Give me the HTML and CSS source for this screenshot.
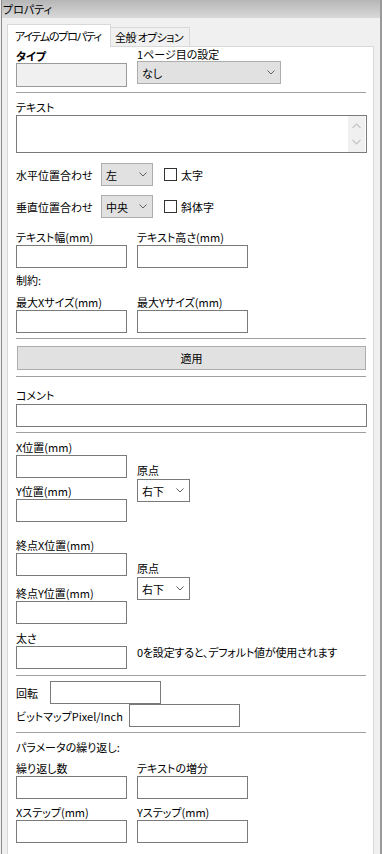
FILE: index.html
```html
<!DOCTYPE html>
<html lang="ja">
<head>
    <meta charset="UTF-8">
    <meta name="viewport" content="width=device-width, initial-scale=1.0">
    <title>プロパティ</title>
    <link rel="stylesheet" href="styles.css">
</head>
<body>
    <div class="window">
        <div class="titlebar">プロパティ</div>

        <div class="tabs">
            <div class="tab active">アイテムのプロパティ</div>
            <div class="tab">全般 オプション</div>
        </div>

        <div class="panel">
            <!-- type / first page -->
            <div class="pair">
                <div>
                    <span class="lbl lbl-bold">タイプ</span>
                    <div class="box box-tall box-disabled"></div>
                </div>
                <div>
                    <span class="lbl lbl-tight">1ページ目の設定</span>
                    <div class="combo combo-gray combo-wide">
                        <span>なし</span>
                        <svg width="8" height="5" viewBox="0 0 8 5"><path d="M0.5 0.5 L4 4 L7.5 0.5" fill="none" stroke="#606060"/></svg>
                    </div>
                </div>
            </div>

            <hr class="sep mt5">

            <!-- text -->
            <span class="lbl mt6">テキスト</span>
            <div class="textarea">
                <div class="scrollbar">
                    <svg width="9" height="6" viewBox="0 0 9 6"><path d="M0.5 5 L4.5 1 L8.5 5" fill="none" stroke="#c4c4c4" stroke-width="1.2"/></svg>
                    <svg width="9" height="6" viewBox="0 0 9 6"><path d="M0.5 1 L4.5 5 L8.5 1" fill="none" stroke="#c4c4c4" stroke-width="1.2"/></svg>
                </div>
            </div>

            <div class="align-row mt10">
                <span class="align-lbl">水平位置合わせ</span>
                <div class="combo combo-gray combo-small">
                    <span>左</span>
                    <svg width="8" height="5" viewBox="0 0 8 5"><path d="M0.5 0.5 L4 4 L7.5 0.5" fill="none" stroke="#606060"/></svg>
                </div>
                <span class="check"></span>
                <span class="check-lbl">太字</span>
            </div>

            <div class="align-row mt9">
                <span class="align-lbl">垂直位置合わせ</span>
                <div class="combo combo-gray combo-small">
                    <span>中央</span>
                    <svg width="8" height="5" viewBox="0 0 8 5"><path d="M0.5 0.5 L4 4 L7.5 0.5" fill="none" stroke="#606060"/></svg>
                </div>
                <span class="check"></span>
                <span class="check-lbl">斜体字</span>
            </div>

            <div class="pair mt11">
                <div>
                    <span class="lbl">テキスト幅(mm)</span>
                    <div class="box"></div>
                </div>
                <div>
                    <span class="lbl">テキスト高さ(mm)</span>
                    <div class="box"></div>
                </div>
            </div>

            <span class="lbl mt4">制約:</span>

            <div class="pair mt6">
                <div>
                    <span class="lbl">最大Xサイズ(mm)</span>
                    <div class="box"></div>
                </div>
                <div>
                    <span class="lbl">最大Yサイズ(mm)</span>
                    <div class="box"></div>
                </div>
            </div>

            <hr class="sep mt5">

            <div class="button mt7">適用</div>

            <hr class="sep mt6">

            <!-- comment -->
            <span class="lbl mt10">コメント</span>
            <div class="box box-full mt1"></div>

            <hr class="sep mt5">

            <!-- position -->
            <div class="pair mt6">
                <div>
                    <span class="lbl">X位置(mm)</span>
                    <div class="box"></div>
                    <span class="lbl mt5">Y位置(mm)</span>
                    <div class="box"></div>
                </div>
                <div>
                    <span class="lbl mt23">原点</span>
                    <div class="combo combo-white mt1">
                        <span>右下</span>
                        <svg width="8" height="5" viewBox="0 0 8 5"><path d="M0.5 0.5 L4 4 L7.5 0.5" fill="none" stroke="#606060"/></svg>
                    </div>
                </div>
            </div>

            <div class="pair mt15">
                <div>
                    <span class="lbl">終点X位置(mm)</span>
                    <div class="box"></div>
                    <span class="lbl mt9">終点Y位置(mm)</span>
                    <div class="box"></div>
                </div>
                <div>
                    <span class="lbl mt23">原点</span>
                    <div class="combo combo-white mt1">
                        <span>右下</span>
                        <svg width="8" height="5" viewBox="0 0 8 5"><path d="M0.5 0.5 L4 4 L7.5 0.5" fill="none" stroke="#606060"/></svg>
                    </div>
                </div>
            </div>

            <div class="pair pair-note mt6">
                <div>
                    <span class="lbl">太さ</span>
                    <div class="box"></div>
                </div>
                <span class="note">0を設定すると、デフォルト値が使用されます</span>
            </div>

            <hr class="sep mt6">

            <div class="inline-row mt5">
                <span class="inline-lbl rot-lbl">回転</span>
                <div class="box"></div>
            </div>
            <div class="inline-row">
                <span class="inline-lbl bmp-lbl">ビットマップPixel/Inch</span>
                <div class="box"></div>
            </div>

            <hr class="sep mt5">

            <!-- repeat -->
            <span class="lbl mt6">パラメータの繰り返し:</span>

            <div class="pair mt5">
                <div>
                    <span class="lbl">繰り返し数</span>
                    <div class="box"></div>
                </div>
                <div>
                    <span class="lbl">テキストの増分</span>
                    <div class="box"></div>
                </div>
            </div>

            <div class="pair mt5">
                <div>
                    <span class="lbl">Xステップ(mm)</span>
                    <div class="box"></div>
                </div>
                <div>
                    <span class="lbl">Yステップ(mm)</span>
                    <div class="box"></div>
                </div>
            </div>
        </div>
    </div>
</body>
</html>
```

FILE: styles.css
```css
* {
    box-sizing: border-box;
}

body {
    margin: 0;
    padding: 0;
    background-color: #f0f0f0;
    font-family: "Noto Sans CJK JP", "Noto Sans", sans-serif;
    font-size: 11px;
    font-feature-settings: "palt";
    color: #000;
    overflow: hidden;
}

.window {
    margin-left: 1px;
    width: 381px;
    border-left: 1px solid #8c8c8c;
    border-right: 2px solid #9a9a9a;
    min-height: 900px;
}

.titlebar {
    height: 18px;
    line-height: 18px;
    padding-left: 1px;
    background: linear-gradient(#b6b6b6, #d9d9d9);
}

/* tabs */
.tabs {
    display: flex;
    align-items: flex-end;
    height: 28px;
    padding-left: 5px;
}

.tab {
    width: 79px;
    height: 19px;
    line-height: 18px;
    padding-left: 4px;
    white-space: nowrap;
    letter-spacing: -0.6px;
    border: 1px solid #d9d9d9;
    border-left: none;
    border-bottom: none;
    background: #f0f0f0;
}

.tab.active {
    position: relative;
    z-index: 1;
    width: 104px;
    height: 23px;
    line-height: 22px;
    margin-bottom: -1px;
    padding-left: 7px;
    letter-spacing: -1.3px;
    border-left: 1px solid #d9d9d9;
    background: #fff;
}

.panel {
    margin-left: 5px;
    width: 367px;
    padding: 0 6px 30px 8px;
    background: #fff;
    border: 1px solid #d9d9d9;
}

/* generic pieces */
.lbl {
    display: block;
    height: 16px;
    line-height: 16px;
    white-space: nowrap;
}

.lbl-bold {
    font-weight: bold;
    height: 14px;
    line-height: 14px;
    margin-top: 2px;
}

.lbl-tight {
    height: 14px;
    line-height: 14px;
}

.box {
    width: 111px;
    height: 23px;
    border: 1px solid #7a7a7a;
    background: #fff;
}

.box-tall {
    height: 24px;
}

.box-disabled {
    background: #f0f0f0;
    border-color: #9a9a9a;
}

.box-full {
    width: 351px;
}

.sep {
    margin-bottom: 0;
    margin-left: 0;
    margin-right: 1px;
    height: 1px;
    border: none;
    background: #a0a0a0;
}

.pair {
    display: grid;
    grid-template-columns: 111px auto;
    column-gap: 10px;
    align-items: start;
}

.pair-note .note {
    padding-top: 14px;
    line-height: 16px;
    white-space: nowrap;
    letter-spacing: -0.2px;
}

/* combo boxes */
.combo {
    display: flex;
    align-items: center;
    justify-content: space-between;
    width: 53px;
    height: 23px;
    padding: 0 5px 0 4px;
    border: 1px solid #7a7a7a;
    background: #fff;
}

.combo-gray {
    border-color: #adadad;
    background: #e1e1e1;
}

.combo-wide {
    width: 144px;
}

.combo-small {
    width: 52px;
}

/* text area */
.textarea {
    display: flex;
    justify-content: flex-end;
    width: 351px;
    height: 38px;
    border: 1px solid #7a7a7a;
    padding: 0 1px 0 0;
}

.scrollbar {
    display: flex;
    flex-direction: column;
    justify-content: space-between;
    align-items: center;
    width: 17px;
    padding: 7px 0 7px;
    background: #f0f0f0;
}

/* alignment rows */
.align-row {
    display: flex;
    align-items: center;
    height: 23px;
}

.align-lbl {
    width: 85px;
    white-space: nowrap;
}

.check {
    width: 13px;
    height: 13px;
    margin-left: 11px;
    border: 1px solid #333;
    background: #fff;
}

.check-lbl {
    margin-left: 4px;
}

/* apply button */
.button {
    margin-left: 1px;
    width: 349px;
    height: 24px;
    line-height: 22px;
    text-align: center;
    border: 1px solid #adadad;
    background: #e1e1e1;
}

/* inline label rows */
.inline-row {
    display: flex;
    align-items: center;
    height: 23px;
}

.inline-lbl {
    white-space: nowrap;
}

.rot-lbl {
    width: 34px;
}

.bmp-lbl {
    width: 113px;
}

/* spacing */
.mt1 { margin-top: 1px; }
.mt4 { margin-top: 4px; }
.mt5 { margin-top: 5px; }
.mt6 { margin-top: 6px; }
.mt7 { margin-top: 7px; }
.mt9 { margin-top: 9px; }
.mt10 { margin-top: 10px; }
.mt11 { margin-top: 11px; }
.mt15 { margin-top: 15px; }
.mt23 { margin-top: 23px; }
```
